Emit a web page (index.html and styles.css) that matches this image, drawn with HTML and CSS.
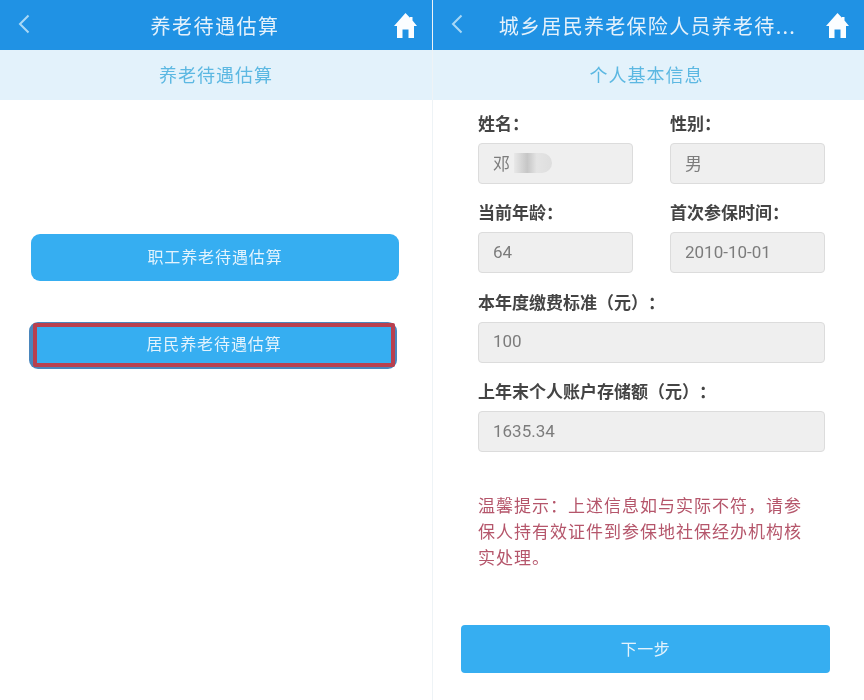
FILE: index.html
```html
<!DOCTYPE html>
<html lang="zh-CN">
  <head>
    <meta charset="UTF-8" />
    <meta name="viewport" content="width=device-width, initial-scale=1.0" />
    <title>养老待遇估算</title>
    <link rel="stylesheet" href="styles.css">
  </head>
  <body>
    <div class="screens">
      <!-- Left screen: choose estimate type -->
      <section class="screen">
        <header class="topbar">
          <svg class="back-icon" viewBox="0 0 12 20"><path d="M10.500 1.500 L2 10 L10.500 18.500" /></svg>
          <h1 class="topbar-title">养老待遇估算</h1>
          <svg class="home-icon" viewBox="0 0 23 25"><path d="M11.500 0 L16 4.800 V4 H18.500 V7.500 L23 13 H20 V25 H14.500 V16.500 H8.500 V25 H3 V13 H0 Z" /></svg>
        </header>
        <div class="subbar">养老待遇估算</div>
        <div class="choices">
          <button class="btn btn-choice">职工养老待遇估算</button>
          <button class="btn btn-choice btn-marked"><span class="mark">居民养老待遇估算</span></button>
        </div>
      </section>

      <!-- Right screen: personal info -->
      <section class="screen">
        <header class="topbar">
          <svg class="back-icon" viewBox="0 0 12 20"><path d="M10.500 1.500 L2 10 L10.500 18.500" /></svg>
          <h1 class="topbar-title topbar-title-long">城乡居民养老保险人员养老待...</h1>
          <svg class="home-icon" viewBox="0 0 23 25"><path d="M11.500 0 L16 4.800 V4 H18.500 V7.500 L23 13 H20 V25 H14.500 V16.500 H8.500 V25 H3 V13 H0 Z" /></svg>
        </header>
        <div class="subbar subbar-right">个人基本信息</div>
        <div class="form">
          <div class="form-row">
            <div class="field field-half">
              <div class="field-label">姓名：</div>
              <div class="field-value">邓<span class="name-blur"></span></div>
            </div>
            <div class="field field-half">
              <div class="field-label">性别：</div>
              <div class="field-value">男</div>
            </div>
          </div>
          <div class="form-row">
            <div class="field field-half">
              <div class="field-label">当前年龄：</div>
              <div class="field-value">64</div>
            </div>
            <div class="field field-half">
              <div class="field-label">首次参保时间：</div>
              <div class="field-value">2010-10-01</div>
            </div>
          </div>
          <div class="field">
            <div class="field-label">本年度缴费标准（元）：</div>
            <div class="field-value">100</div>
          </div>
          <div class="field">
            <div class="field-label">上年末个人账户存储额（元）：</div>
            <div class="field-value">1635.34</div>
          </div>
          <p class="notice">温馨提示：上述信息如与实际不符，请参保人持有效证件到参保地社保经办机构核实处理。</p>
        </div>
        <button class="btn btn-next">下一步</button>
      </section>
    </div>
  </body>
</html>
```

FILE: styles.css
```css
html,
body {
  margin: 0;
  padding: 0;
  height: 700px;
  overflow: hidden;
  background: #fff;
}

body {
  font-family: "Noto Sans CJK SC", "Liberation Sans", sans-serif;
  text-spacing-trim: space-all;
}

.screens {
  display: flex;
  height: 700px;
  filter: blur(0.6px);
}

.screen {
  width: 432px;
  height: 700px;
  box-sizing: border-box;
  overflow: hidden;
  background: #fff;
}

.screen + .screen {
  border-left: 1px solid #eef3f6;
}

/* Top bars */
.topbar {
  display: flex;
  align-items: center;
  height: 50px;
  padding: 0 15px 0 18px;
  background: #2092e4;
  color: #e4f1fb;
}

.topbar-title {
  flex: 1;
  margin: 0;
  padding-left: 6px;
  font-size: 20px;
  font-weight: 400;
  letter-spacing: 1.500px;
  text-align: center;
}

.topbar-title-long {
  letter-spacing: 1.300px;
  white-space: nowrap;
}

.back-icon {
  width: 12px;
  height: 20px;
  margin-top: -3px;
  fill: none;
  stroke: #a9d8f6;
  stroke-width: 2;
}

.home-icon {
  width: 23px;
  height: 25px;
  fill: #fbfdff;
}

.subbar {
  height: 50px;
  line-height: 48px;
  background: #e3f2fb;
  color: #5cb8e2;
  font-size: 18px;
  letter-spacing: 1px;
  text-align: center;
}

.subbar-right {
  padding-right: 4px;
}

/* Buttons */
.btn {
  display: block;
  border: none;
  padding: 0;
  background: #36aef1;
  color: #e2f3fd;
  font-family: inherit;
  text-align: center;
}

.choices {
  display: flex;
  flex-direction: column;
  gap: 41px;
  padding: 134px 0 0 31px;
}

.btn-choice {
  width: 368px;
  height: 47px;
  padding-bottom: 4px;
  border-radius: 9px;
  font-size: 16px;
  letter-spacing: 0.900px;
}

.btn-marked {
  margin-left: -2px;
  padding: 1px 2px 2px 4px;
  background: #4a86bd;
}

.mark {
  display: block;
  height: 44px;
  line-height: 32px;
  box-sizing: border-box;
  border: 4px solid #b8404f;
  border-radius: 2px;
  background: #36aef1;
}

.btn-next {
  width: 369px;
  height: 48px;
  margin: 55px 0 0 28px;
  padding-bottom: 2px;
  border-radius: 4px;
  font-size: 16px;
  letter-spacing: 0.500px;
}

/* Form */
.form {
  padding: 12px 39px 0 45px;
}

.form-row {
  display: flex;
  gap: 37px;
}

.field {
  margin-bottom: 17.400px;
}

.field-half {
  width: 155px;
}

.field-label {
  height: 22px;
  margin-bottom: 9px;
  line-height: 22px;
  color: #444;
  font-size: 17px;
  font-weight: 700;
}

.field-value {
  display: flex;
  align-items: center;
  height: 41px;
  box-sizing: border-box;
  padding: 0 0 2px 14px;
  border: 1px solid #dcdcdc;
  border-radius: 4px;
  background: #efefef;
  color: #7c7c7c;
  font-family: "Roboto", "Noto Sans CJK SC", sans-serif;
  font-size: 17px;
}

.name-blur {
  width: 38px;
  height: 20px;
  margin-left: 4px;
  border-radius: 0 10px 10px 0;
  background: linear-gradient(90deg, #e8e8e8, #c6c6c6 35%, #e4e4e4 60%, #dedede);
}

.notice {
  margin: 40px 20px 0 0;
  color: #b5566b;
  font-size: 17px;
  line-height: 26px;
  letter-spacing: 1px;
}
```
